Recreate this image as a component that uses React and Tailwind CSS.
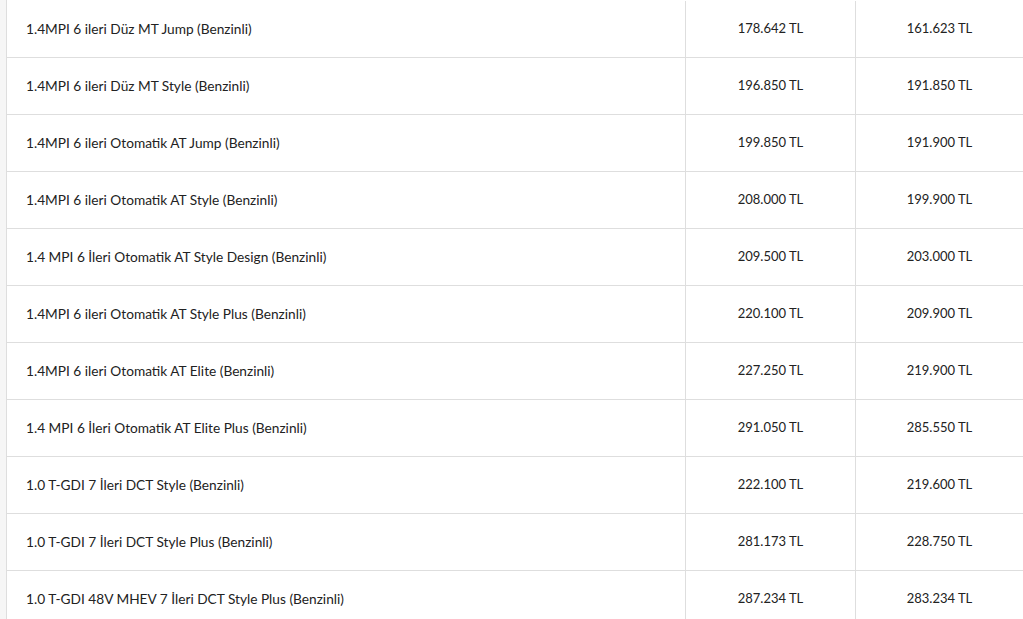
import React from 'react';

const rows = [
  ['1.4MPI 6 ileri Düz MT Jump (Benzinli)', '178.642 TL', '161.623 TL'],
  ['1.4MPI 6 ileri Düz MT Style (Benzinli)', '196.850 TL', '191.850 TL'],
  ['1.4MPI 6 ileri Otomatik AT Jump (Benzinli)', '199.850 TL', '191.900 TL'],
  ['1.4MPI 6 ileri Otomatik AT Style (Benzinli)', '208.000 TL', '199.900 TL'],
  ['1.4 MPI 6 İleri Otomatik AT Style Design (Benzinli)', '209.500 TL', '203.000 TL'],
  ['1.4MPI 6 ileri Otomatik AT Style Plus (Benzinli)', '220.100 TL', '209.900 TL'],
  ['1.4MPI 6 ileri Otomatik AT Elite (Benzinli)', '227.250 TL', '219.900 TL'],
  ['1.4 MPI 6 İleri Otomatik AT Elite Plus (Benzinli)', '291.050 TL', '285.550 TL'],
  ['1.0 T-GDI 7 İleri DCT Style (Benzinli)', '222.100 TL', '219.600 TL'],
  ['1.0 T-GDI 7 İleri DCT Style Plus (Benzinli)', '281.173 TL', '228.750 TL'],
  ['1.0 T-GDI 48V MHEV 7 İleri DCT Style Plus (Benzinli)', '287.234 TL', '283.234 TL'],
];

const App = () => {
  return (
    <div className="h-[619px] overflow-hidden bg-[#f6f6f6] pl-[6px]" style={{ fontFamily: 'Lato, "Liberation Sans", sans-serif' }}>
      <div className="bg-white border-l border-[#dedede] pt-px text-[#222]">
        {rows.map((row, i) => (
          <div key={i} className="grid grid-cols-[678px_170px_1fr] h-[57px] border-b border-[#dedede]">
            <div className="flex items-center pl-[19px] text-[13.7px]">{row[0]}</div>
            <div className="flex items-center justify-center border-l border-[#dedede] text-[13px]">{row[1]}</div>
            <div className="flex items-center justify-center border-l border-[#dedede] text-[13px]">{row[2]}</div>
          </div>
        ))}
      </div>
    </div>
  );
};

export default App;
